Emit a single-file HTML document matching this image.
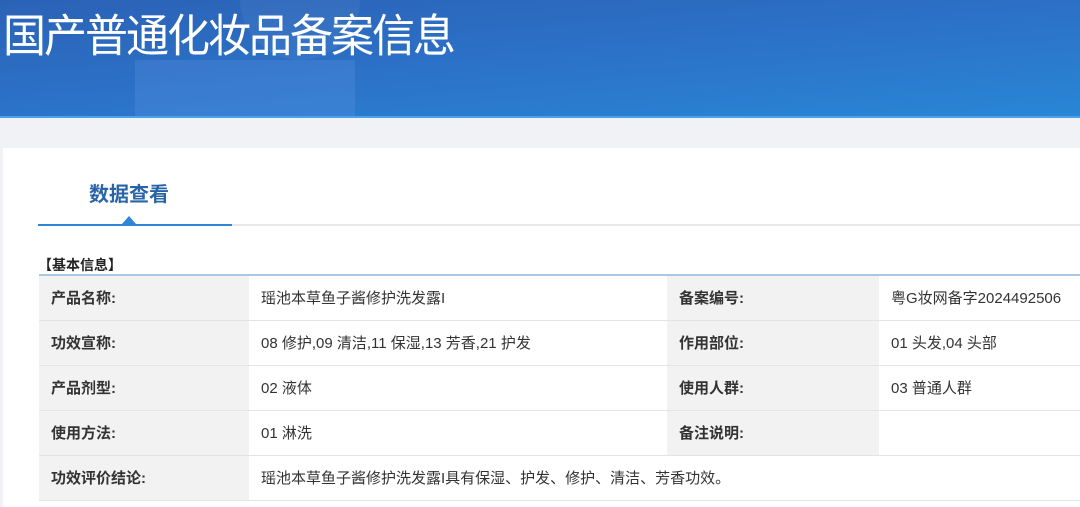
<!DOCTYPE html>
<html><head><meta charset="utf-8"><style>
*{margin:0;padding:0;box-sizing:border-box}
body{width:1080px;height:507px;overflow:hidden;background:#f0f2f5;font-family:"Liberation Sans","Noto Sans CJK SC",sans-serif;position:relative}
.hdr{position:absolute;left:0;top:0;width:1080px;height:118px;background:linear-gradient(175deg,#2b62b6 0%,#2b72c8 50%,#2a86d6 100%);overflow:hidden}
.hdr .g1{position:absolute;left:135px;top:60px;width:220px;height:60px;background:rgba(110,160,235,.22)}
.hdr .g2{position:absolute;left:240px;top:-60px;width:120px;height:120px;border-radius:50%;background:rgba(255,255,255,.05)}
.hdr .b{position:absolute;left:0;bottom:0;width:1080px;height:2px;background:#4aa3ea}
.title{position:absolute;left:3px;top:12px;color:#fff;font-size:43px;letter-spacing:-2px;line-height:50px;transform:scaleY(1.05)}
.panel{position:absolute;left:3px;top:148px;width:1077px;height:359px;background:#fff}
.tab{position:absolute;left:89px;top:178px;font-size:20px;font-weight:bold;color:#2a64a8}
.line{position:absolute;left:38px;top:224px;width:1042px;height:2px;background:#e6e8eb}
.line2{position:absolute;left:38px;top:224px;width:194px;height:2px;background:#2f86d6}
.tri{position:absolute;left:122px;top:216px;width:0;height:0;border-left:7px solid transparent;border-right:7px solid transparent;border-bottom:8px solid #2f86d6}
.sec{position:absolute;left:38px;top:255px;font-size:14px;font-weight:bold;color:#222}
table{position:absolute;left:39px;top:274px;border-collapse:collapse;border-top:2px solid #a9c8e6;width:1060px}
td{border-bottom:1px solid #e4e4e4;height:45px;font-size:15px;color:#333;padding-left:12px}
td.l{background:#f2f2f2;font-weight:bold;color:#333;width:210px}
td.v{width:418px}
</style></head><body>
<div class="hdr"><div class="g1"></div><div class="g2"></div><div class="b"></div></div>
<div class="title">国产普通化妆品备案信息</div>
<div class="panel"></div>
<div class="tab">数据查看</div>
<div class="line"></div><div class="line2"></div><div class="tri"></div>
<div class="sec">【基本信息】</div>
<table>
<tr><td class="l">产品名称:</td><td class="v">瑶池本草鱼子酱修护洗发露I</td><td class="l" style="width:212px">备案编号:</td><td>粤G妆网备字2024492506</td></tr>
<tr><td class="l">功效宣称:</td><td class="v">08 修护,09 清洁,11 保湿,13 芳香,21 护发</td><td class="l">作用部位:</td><td>01 头发,04 头部</td></tr>
<tr><td class="l">产品剂型:</td><td class="v">02 液体</td><td class="l">使用人群:</td><td>03 普通人群</td></tr>
<tr><td class="l">使用方法:</td><td class="v">01 淋洗</td><td class="l">备注说明:</td><td></td></tr>
<tr><td class="l">功效评价结论:</td><td colspan="3">瑶池本草鱼子酱修护洗发露I具有保湿、护发、修护、清洁、芳香功效。</td></tr>
</table>
</body></html>
